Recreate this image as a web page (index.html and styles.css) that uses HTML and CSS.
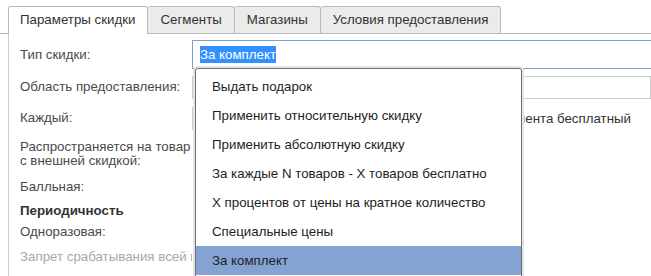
FILE: index.html
```html
<!DOCTYPE html>
<html lang="ru">
<head>
    <meta charset="UTF-8">
    <title>Параметры скидки</title>
    <link rel="stylesheet" href="styles.css">
</head>
<body>
    <div class="tabs">
        <div class="tab active">Параметры скидки</div>
        <div class="tab">Сегменты</div>
        <div class="tab">Магазины</div>
        <div class="tab">Условия предоставления</div>
    </div>

    <div class="panel">
        <div class="form">
            <div class="label">Тип скидки:</div>
            <div class="field">
                <div class="combo">
                    <div class="combo-box"><span class="selected-text">За комплект</span></div>
                    <ul class="dropdown">
                        <li>Выдать подарок</li>
                        <li>Применить относительную скидку</li>
                        <li>Применить абсолютную скидку</li>
                        <li>За каждые N товаров - X товаров бесплатно</li>
                        <li>X процентов от цены на кратное количество</li>
                        <li>Специальные цены</li>
                        <li class="hover">За комплект</li>
                    </ul>
                </div>
            </div>

            <div class="label">Область предоставления:</div>
            <div class="field"><div class="text-input"></div></div>

            <div class="label">Каждый:</div>
            <div class="field field-each">
                <div class="text-input small"></div>
                <span class="hint">товар сегмента бесплатный</span>
            </div>

            <div class="label">Распространяется на товар<br>с внешней скидкой:</div>
            <div class="field"></div>

            <div class="label">Балльная:</div>
            <div class="field"></div>

            <div class="label section">Периодичность</div>
            <div class="field"></div>

            <div class="label">Одноразовая:</div>
            <div class="field"></div>

            <div class="label disabled"><span class="clip">Запрет срабатывания всей покупки:</span></div>
            <div class="field"></div>
        </div>
    </div>
</body>
</html>
```

FILE: styles.css
```css
html, body {
    margin: 0;
    padding: 0;
    background-color: white;
    overflow: hidden;
}
body {
    width: 651px;
    height: 276px;
    font-family: "Liberation Sans", Arial, sans-serif;
    font-size: 13.3px;
    color: #4a4a4a;
}
.tabs {
    display: flex;
    padding: 6px 0 0 8px;
    border-bottom: 1px solid #b9b9b9;
    height: 27px;
}
.tab {
    height: 26px;
    line-height: 26px;
    padding: 0 12px;
    border: 1px solid #b9b9b9;
    border-bottom: none;
    border-left: none;
    border-radius: 3px 3px 0 0;
    background-color: #ebebeb;
    color: #333;
}
.tab.active {
    height: 27px;
    padding-left: 11px;
    border-left: 1px solid #b9b9b9;
    background-color: white;
    margin-bottom: -1px;
}
.panel {
    margin-left: 8px;
    border-left: 1px solid #cfcfcf;
    padding: 6px 0 20px 11px;
}
.form {
    display: grid;
    grid-template-columns: 172px 1fr;
    grid-template-rows: 29px 36px 26px 46px 20px 28px 14px 36px;
}
.label {
    display: flex;
    align-items: center;
    white-space: nowrap;
    line-height: 14px;
    overflow: hidden;
}
.label.section {
    font-weight: bold;
    color: #333;
}
.label.disabled {
    color: #a8a8a8;
}
.field {
    display: flex;
    align-items: center;
    min-width: 0;
}
.field-each {
    padding-right: 20px;
}
.hint {
    margin-left: auto;
    color: #333;
    white-space: nowrap;
}
.combo {
    position: relative;
    align-self: stretch;
}
.combo-box {
    width: 470px;
    height: 27px;
    border: 1px solid #7e9fd6;
    display: flex;
    align-items: center;
    padding-left: 7px;
}
.selected-text {
    background-color: #3390ff;
    color: white;
    line-height: 17px;
}
.text-input {
    width: 470px;
    height: 21px;
    border: 1px solid #cccccc;
}
.text-input.small {
    width: 60px;
}
.dropdown {
    position: absolute;
    top: 28px;
    left: 3px;
    width: 325px;
    margin: 0;
    padding: 3px 0 6px;
    list-style: none;
    background-color: white;
    border: 1px solid #6f6f6f;
    border-radius: 3px;
    box-shadow: 0 0 0 2px #e4e4e4;
    color: #1e1e1e;
}
.dropdown li {
    height: 29px;
    line-height: 29px;
    padding-left: 16px;
    white-space: nowrap;
}
.dropdown li.hover {
    background-color: #85a3d2;
}
```
